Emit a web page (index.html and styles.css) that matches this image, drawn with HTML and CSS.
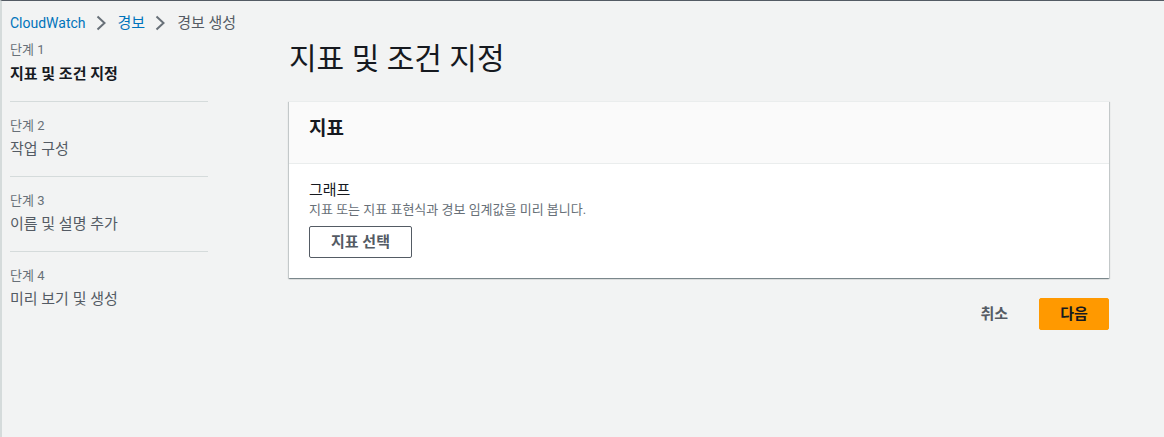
FILE: index.html
```html
<!DOCTYPE html>
<html lang="ko">
<head>
<meta charset="utf-8">
<title>경보 생성</title>
<link rel="stylesheet" href="styles.css">
</head>
<body>
<nav class="breadcrumbs">
  <a class="crumb link latin" href="#">CloudWatch</a>
  <svg class="chev" viewBox="0 0 16 16" width="16" height="16"><polyline points="3.5,1.5 10.5,8 3.5,14.5" fill="none" stroke="#687078" stroke-width="2"/></svg>
  <a class="crumb link" href="#">경보</a>
  <svg class="chev" viewBox="0 0 16 16" width="16" height="16"><polyline points="3.5,1.5 10.5,8 3.5,14.5" fill="none" stroke="#687078" stroke-width="2"/></svg>
  <span class="crumb current">경보 생성</span>
</nav>
<div class="page">
  <aside class="steps">
    <div class="step active">
      <div class="step-label">단계 1</div>
      <div class="step-title">지표 및 조건 지정</div>
    </div>
    <div class="step">
      <div class="step-label">단계 2</div>
      <div class="step-title">작업 구성</div>
    </div>
    <div class="step">
      <div class="step-label">단계 3</div>
      <div class="step-title">이름 및 설명 추가</div>
    </div>
    <div class="step">
      <div class="step-label">단계 4</div>
      <div class="step-title">미리 보기 및 생성</div>
    </div>
  </aside>
  <main class="main">
    <h1 class="title">지표 및 조건 지정</h1>
    <section class="card">
      <div class="card-header"><h2>지표</h2></div>
      <div class="card-body">
        <div class="field-label">그래프</div>
        <div class="field-desc">지표 또는 지표 표현식과 경보 임계값을 미리 봅니다.</div>
        <button class="btn btn-normal">지표 선택</button>
      </div>
    </section>
    <div class="actions">
      <button class="btn btn-link">취소</button>
      <button class="btn btn-primary">다음</button>
    </div>
  </main>
</div>
</body>
</html>
```
FILE: styles.css
```css
* { box-sizing: border-box; }
html, body { margin: 0; padding: 0; }
body {
  min-height: 100vh;
  background: #f2f3f3;
  border-top: 1px solid #545b64;
  border-left: 2px solid #d5dbdb;
  font-family: Roboto, "Noto Sans CJK KR", sans-serif;
  color: #16191f;
  font-size: 15px;
}
.breadcrumbs {
  display: flex;
  align-items: center;
  gap: 8px;
  padding: 11px 0 0 8px;
  height: 32px;
  line-height: 20px;
}
.crumb { text-decoration: none; font-size: 15px; }
.latin { font-size: 14px; }
.link { color: #0073bb; }
.current { color: #545b64; }
.chev { display: block; }
.page {
  display: flex;
  padding: 9px 55px 0 8px;
}
.steps { width: 198px; flex: none; }
.step {
  border-top: 1px solid #d5dbdb;
  padding: 16px 0 17px;
}
.step:first-child { border-top: none; padding-top: 0; }
.step-label {
  font-size: 13px;
  line-height: 16px;
  color: #687078;
}
.step-title {
  margin-top: 6px;
  font-size: 15px;
  line-height: 20px;
  color: #545b64;
}
.step:not(:first-child) .step-title { margin-top: 5px; }
.active .step-title { color: #16191f; font-weight: 700; }
.main { flex: 1; margin-left: 81px; }
.title {
  margin: -1px 0 0;
  font-size: 30px;
  line-height: 36px;
  font-weight: 400;
  color: #16191f;
}
.card {
  margin-top: 24px;
  background: #fff;
  border-top: 1px solid #eaeded;
  box-shadow: 0 1px 1px 0 rgba(0,28,36,.3), 1px 1px 1px 0 rgba(0,28,36,.15), -1px 1px 1px 0 rgba(0,28,36,.15);
}
.card-header {
  background: #fafafa;
  border-bottom: 1px solid #eaeded;
  padding: 15px 20px 22px;
}
.card-header h2 {
  margin: 0;
  font-size: 19px;
  line-height: 24px;
  font-weight: 700;
}
.card-body { padding: 16px 20px 20px; }
.field-label { font-size: 15px; line-height: 20px; color: #16191f; }
.field-desc { font-size: 13px; line-height: 16px; color: #687078; margin-top: 2px; }
.btn {
  font-family: inherit;
  font-size: 15px;
  font-weight: 700;
  line-height: 20px;
  height: 32px;
  border-radius: 2px;
  cursor: pointer;
}
.btn-normal {
  margin-top: 8px;
  width: 103px;
  background: #fff;
  border: 1px solid #545b64;
  color: #545b64;
  padding: 4px 0;
}
.actions {
  display: flex;
  justify-content: flex-end;
  gap: 10px;
  margin-top: 20px;
}
.btn-link {
  background: transparent;
  border: 1px solid transparent;
  color: #545b64;
  padding: 4px 20px;
}
.btn-primary {
  width: 70px;
  background: #ff9900;
  border: 1px solid #ff9900;
  color: #16191f;
  padding: 4px 0;
}
```
